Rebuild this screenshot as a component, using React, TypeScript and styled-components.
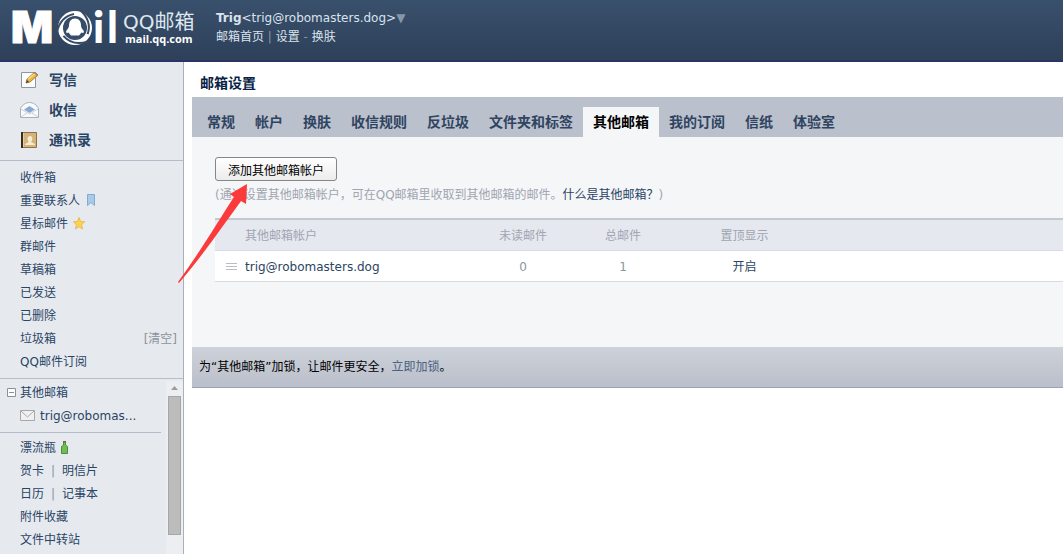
import React from "react";
import styled, { createGlobalStyle } from "styled-components";

const Global = createGlobalStyle`
  * { box-sizing: border-box; }
  html, body { margin: 0; background: #fff; }
  body, button, table {
    font-family: "DejaVu Sans", "Noto Sans CJK SC", sans-serif;
    font-size: 12px;
    line-height: 20px;
    color: #2a4464;
  }
  ul { list-style: none; margin: 0; padding: 0; }
`;

const Page = styled.div`
  display: flex;
  flex-direction: column;
  height: 100vh;
  overflow: hidden;
`;

const Header = styled.header`
  display: flex;
  flex: none;
  height: 62px;
  padding: 0 12px;
  background: linear-gradient(#39506c, #2e405a);
  border-bottom: 2px solid #2b3565;
`;

const Logo = styled.div`
  display: flex;
  align-items: center;
  gap: 4px;
  flex: none;
  width: 204px;
  height: 56px;
  color: #fff;
`;

const LogoMark = styled.svg`
  display: block;
  flex: none;
  width: 107px;
  height: 56px;
  overflow: visible;
`;

const LogoName = styled.div`
  display: flex;
  flex-direction: column;
  font-size: 20px;
  line-height: 22px;
  color: #dfe7ef;
  white-space: nowrap;
`;

const LogoDomain = styled.span`
  padding-left: 2px;
  font: bold 11px/12px "Open Sans", sans-serif;
  color: #fff;
`;

const Account = styled.div`
  display: flex;
  flex-direction: column;
  padding-top: 8px;
  color: #dbe3ec;
`;

const AccountLine = styled.div`
  display: flex;
  height: 19px;
  white-space: pre;
`;

const Caret = styled.span`
  color: #8796a9;
`;

const Link = styled.a<{ $tone?: string; $bold?: boolean }>`
  color: ${(p) => p.$tone || "#2a4464"};
  font-weight: ${(p) => (p.$bold ? "bold" : "normal")};
  text-decoration: none;
`;

const Body = styled.div`
  display: flex;
  flex: 1;
  min-height: 0;
`;

const Sidebar = styled.nav`
  display: flex;
  flex-direction: column;
  flex: none;
  width: 184px;
  background: #e6eaef;
  border-right: 1px solid #a9b0bd;
`;

const MainLinks = styled.ul`
  padding: 3px 0 5px 20px;
  border-bottom: 1px solid #b5bcca;
`;

const MainLink = styled.li`
  display: flex;
  align-items: center;
  gap: 10px;
  height: 30px;
  font-size: 14px;
`;

const Folders = styled.ul<{ $top?: number; $bottom?: number }>`
  padding: ${(p) => p.$top || 0}px 6px ${(p) => p.$bottom || 0}px 20px;
`;

const Folder = styled.li`
  display: flex;
  align-items: center;
  gap: 5px;
  height: 23px;
  white-space: nowrap;
`;

const Clear = styled(Link)`
  margin-left: auto;
`;

const Divider = styled.hr`
  width: 100%;
  height: 1px;
  margin: 0;
  border: 0;
  background: #b5bcca;
`;

const Bar = styled.span`
  padding: 0 2px;
  color: #8793a3;
`;

const Lower = styled.div`
  display: flex;
  flex: 1;
  min-height: 0;
  margin-top: 2px;
`;

const LowerList = styled.div`
  flex: 1;
  min-width: 0;
  overflow: hidden;
  margin-right: 5px;
`;

const GroupRow = styled.div`
  display: flex;
  align-items: center;
  gap: 4px;
  height: 23px;
  padding-left: 7px;
`;

const Toggle = styled.button`
  display: flex;
  padding: 0;
  border: 0;
  background: none;
`;

const Scrollbar = styled.div`
  display: flex;
  flex-direction: column;
  align-items: center;
  flex: none;
  width: 17px;
  padding: 5px 0 19px;
  background: #eceef1;
`;

const Thumb = styled.div`
  flex: 1;
  width: 13px;
  margin-top: 6px;
  background: #bcbcbc;
  border: 1px solid #a6a6a6;
`;

const Main = styled.main`
  flex: 1;
  min-width: 0;
  padding-left: 8px;
`;

const Title = styled.h1`
  margin: 0;
  padding: 11px 8px 4px;
  font-size: 14px;
  line-height: 20px;
  font-weight: bold;
  color: #0a1f45;
`;

const Tabs = styled.ul`
  display: flex;
  padding: 10px 5px 0;
  background: #bbc0cd;
  white-space: nowrap;
`;

const Tab = styled.li<{ $active?: boolean }>`
  height: 30px;
  padding: 0 10px;
  font-size: 14px;
  line-height: 30px;
  background: ${(p) => (p.$active ? "#f5f6f8" : "transparent")};
`;

const Panel = styled.section`
  padding: 20px 0 65px 23px;
  background: #f5f6f8;
`;

const AddButton = styled.button`
  display: block;
  height: 24px;
  padding: 3px 12px 0;
  border: 1px solid #868686;
  border-radius: 3px;
  background: linear-gradient(#fff, #ececec);
  line-height: 20px;
  color: #000;
`;

const Hint = styled.p`
  margin: 4px 0 13px;
  color: #a0a5b0;
  white-space: nowrap;
`;

const Accounts = styled.table`
  width: 100%;
  table-layout: fixed;
  border-collapse: collapse;
  border-top: 2px solid #c5c8d0;
`;

const HeadCell = styled.th<{ $width?: number; $left?: boolean }>`
  width: ${(p) => (p.$width ? p.$width + "px" : "auto")};
  height: 31px;
  padding: 2px 0 0;
  background: #e6e8f0;
  border-bottom: 1px solid #d8dbe2;
  font-weight: normal;
  color: #a0a5b0;
  text-align: ${(p) => (p.$left ? "left" : "center")};
`;

const Cell = styled.td<{ $left?: boolean }>`
  height: 31px;
  padding: 2px 0 0;
  background: #fff;
  border-bottom: 1px solid #d8dbe2;
  color: #8e959f;
  text-align: ${(p) => (p.$left ? "left" : "center")};
`;

const Grip = styled.svg`
  display: block;
  margin-left: 11px;
`;

const LockBar = styled.footer`
  height: 41px;
  padding: 0 7px;
  background: linear-gradient(#cdd1d9, #b9bfcb);
  border-bottom: 1px solid #9da3b2;
  line-height: 40px;
  color: #000;
`;

const Pointer = styled.svg`
  position: absolute;
  left: 176px;
  top: 182px;
  pointer-events: none;
`;

const tabs = ["常规", "帐户", "换肤", "收信规则", "反垃圾", "文件夹和标签", "其他邮箱", "我的订阅", "信纸", "体验室"];

function LogoArt() {
  return (
    <LogoMark viewBox="0 0 107 56" aria-label="Mail">
      <text x="-1" y="43" fontFamily="Inter" fontWeight="900" fontSize="44" fill="#fff" stroke="#fff">M</text>
      <text x="81" y="43" fontFamily="Lato" fontWeight="900" fontSize="43" fill="#fff">i</text>
      <text x="95" y="43" fontFamily="Lato" fontWeight="900" fontSize="43" fill="#fff">l</text>
      <circle cx="63" cy="28" r="17" fill="#fff" />
      <circle cx="63" cy="28" r="12" fill="#364c68" />
      {[0, 120, 240].map((angle) => (
        <path
          key={angle}
          d="M45 32c2-9 7-16 17-18"
          transform={`rotate(${angle} 63 28)`}
          fill="none"
          stroke="#364c68"
          strokeWidth="2"
        />
      ))}
      <path d="M63 18.500c-4 0-6 3-6 7 0 2-1 3-2.500 5-1 2 0 3 2 2l2.500 3h8l2.500-3c2 1 3 0 2-2-1.500-2-2.500-3-2.500-5 0-4-2-7-6-7z" fill="#fff" />
    </LogoMark>
  );
}

function ComposeIcon() {
  return (
    <svg width="19" height="18" viewBox="0 0 19 18">
      <path d="M1.500 1.500h14v15h-14z" fill="#fdfdfd" stroke="#8f969f" />
      <path d="M6 12l1-4 8-7 3 3-8 7z" fill="#efb73c" stroke="#8d6c2c" strokeWidth=".8" />
      <path d="M8 8l8-6" stroke="#fae08a" strokeWidth="1.200" />
      <path d="M6 12l1-3 2 2z" fill="#49433a" />
      <path d="M14 2l1-1 3 3-1 1z" fill="#a78366" />
    </svg>
  );
}

function InboxIcon() {
  return (
    <svg width="19" height="18" viewBox="0 0 19 18">
      <path d="M.5 7.500C2 4 6 1.500 9.500 1.500S17 4 18.500 7.500v9H.5z" fill="#f8fafc" stroke="#a8afb8" />
      <path d="M4 8.500L9.500 5 15 8.500 9.500 12z" fill="#8aa9cf" />
      <path d="M1 8l8.500 5L18 8M1 16l6-4m11 4l-6-4" fill="none" stroke="#cbd1d8" />
    </svg>
  );
}

function ContactsIcon() {
  return (
    <svg width="19" height="18" viewBox="0 0 19 18">
      <path d="M1.500 1.500h15v15h-15z" fill="#d3b27c" stroke="#92713f" />
      <path d="M1 1h2v16H1z" fill="#3a2c20" />
      <path d="M5 14c0-2 3-2 4-3-2-2-2-6 1-6s3 4 1 6c1 1 4 1 4 3z" fill="#f9ecd0" />
      <path d="M3.500 2v14" stroke="#ead09f" />
    </svg>
  );
}

function FolderLink({ name, children }: { name: string; children?: React.ReactNode }) {
  return (
    <Folder>
      <Link href="#">{name}</Link>
      {children}
    </Folder>
  );
}

export default function App() {
  return (
    <Page>
      <Global />
      <Header>
        <Logo>
          <LogoArt />
          <LogoName>
            QQ邮箱
            <LogoDomain>mail.qq.com</LogoDomain>
          </LogoName>
        </Logo>
        <Account>
          <AccountLine>
            <b>Trig</b>&lt;trig@robomasters.dog&gt;<Caret>▼</Caret>
          </AccountLine>
          <AccountLine>
            <Link href="#" $tone="#dbe3ec">邮箱首页</Link>
            <Caret> | </Caret>
            <Link href="#" $tone="#dbe3ec">设置</Link>
            <Caret> - </Caret>
            <Link href="#" $tone="#dbe3ec">换肤</Link>
          </AccountLine>
        </Account>
      </Header>
      <Body>
        <Sidebar>
          <MainLinks>
            <MainLink><ComposeIcon /><Link href="#" $bold>写信</Link></MainLink>
            <MainLink><InboxIcon /><Link href="#" $bold>收信</Link></MainLink>
            <MainLink><ContactsIcon /><Link href="#" $bold>通讯录</Link></MainLink>
          </MainLinks>
          <Folders $top={5} $bottom={5}>
            <FolderLink name="收件箱" />
            <FolderLink name="重要联系人">
              <svg width="12" height="13" viewBox="0 0 12 13">
                <path d="M2.500.5h7v11L6 8.500l-3.500 3z" fill="#a9cbea" stroke="#82abd3" />
              </svg>
            </FolderLink>
            <FolderLink name="星标邮件">
              <svg width="12" height="13" viewBox="0 0 12 13">
                <path d="M6 .5l1.600 4 4 .3-3 2.900 1 4.300L6 9.700 2.400 12l1-4.300-3-2.900 4-.3z" fill="#fcd34e" stroke="#e6ab32" strokeWidth=".7" />
              </svg>
            </FolderLink>
            <FolderLink name="群邮件" />
            <FolderLink name="草稿箱" />
            <FolderLink name="已发送" />
            <FolderLink name="已删除" />
            <FolderLink name="垃圾箱"><Clear href="#" $tone="#8c929c">[清空]</Clear></FolderLink>
            <FolderLink name="QQ邮件订阅" />
          </Folders>
          <Divider />
          <Lower>
            <LowerList>
              <GroupRow>
                <Toggle aria-label="折叠">
                  <svg width="9" height="9" viewBox="0 0 9 9">
                    <path d="M.5.5h8v8h-8zM2 4.500h5" fill="#fff" stroke="#8a919b" />
                  </svg>
                </Toggle>
                <Link href="#">其他邮箱</Link>
              </GroupRow>
              <Folders $bottom={5}>
                <Folder>
                  <svg width="15" height="11" viewBox="0 0 15 11">
                    <path d="M.5.5h14v10H.5z" fill="#f0f0f0" stroke="#a8a8a8" />
                    <path d="M1 1l6.500 6L14 1" fill="none" stroke="#a8a8a8" />
                  </svg>
                  <Link href="#">trig@robomas...</Link>
                </Folder>
              </Folders>
              <Divider />
              <Folders $top={3}>
                <FolderLink name="漂流瓶">
                  <svg width="7" height="13" viewBox="0 0 7 13">
                    <path d="M2.500 1h2v3l2 1.500v7H.5v-7l2-1.500z" fill="#73bd56" stroke="#4c8c3b" />
                    <path d="M2 .5h3" stroke="#80603b" />
                  </svg>
                </FolderLink>
                <Folder><Link href="#">贺卡</Link><Bar>|</Bar><Link href="#">明信片</Link></Folder>
                <Folder><Link href="#">日历</Link><Bar>|</Bar><Link href="#">记事本</Link></Folder>
                <FolderLink name="附件收藏" />
                <FolderLink name="文件中转站" />
              </Folders>
            </LowerList>
            <Scrollbar>
              <svg width="7" height="4" viewBox="0 0 7 4"><path d="M0 4l3.500-4L7 4z" fill="#9b9b9b" /></svg>
              <Thumb />
            </Scrollbar>
          </Lower>
        </Sidebar>
        <Main>
          <Title>邮箱设置</Title>
          <Tabs>
            {tabs.map((name) => (
              <Tab key={name} $active={name === "其他邮箱"}>
                <Link href="#" $bold $tone={name === "其他邮箱" ? "#000" : "#2f4460"}>{name}</Link>
              </Tab>
            ))}
          </Tabs>
          <Panel>
            <AddButton>添加其他邮箱帐户</AddButton>
            <Hint>
              (通过设置其他邮箱帐户，可在QQ邮箱里收取到其他邮箱的邮件。
              <Link href="#">什么是其他邮箱？</Link>)
            </Hint>
            <Accounts>
              <thead>
                <tr>
                  <HeadCell $width={30} />
                  <HeadCell $width={228} $left>其他邮箱帐户</HeadCell>
                  <HeadCell $width={100}>未读邮件</HeadCell>
                  <HeadCell $width={100}>总邮件</HeadCell>
                  <HeadCell $width={143}>置顶显示</HeadCell>
                  <HeadCell />
                </tr>
              </thead>
              <tbody>
                <tr>
                  <Cell>
                    <Grip width="11" height="9" viewBox="0 0 11 9">
                      <path d="M0 1.500h11M0 4.500h11M0 7.500h11" stroke="#b9bcc2" />
                    </Grip>
                  </Cell>
                  <Cell $left><Link href="#">trig@robomasters.dog</Link></Cell>
                  <Cell>0</Cell>
                  <Cell>1</Cell>
                  <Cell><Link href="#">开启</Link></Cell>
                  <Cell />
                </tr>
              </tbody>
            </Accounts>
          </Panel>
          <LockBar>
            为“其他邮箱”加锁，让邮件更安全，<Link href="#" $tone="#4a617f">立即加锁</Link>。
          </LockBar>
        </Main>
      </Body>
      <Pointer width="74" height="104" viewBox="0 0 74 104" aria-hidden="true">
        <path d="M71 2L54 12l4 3C43 38 24 70 2 100l1 1C27 73 46 45 65 19l5 3z" fill="#fb3b3b" />
      </Pointer>
    </Page>
  );
}
